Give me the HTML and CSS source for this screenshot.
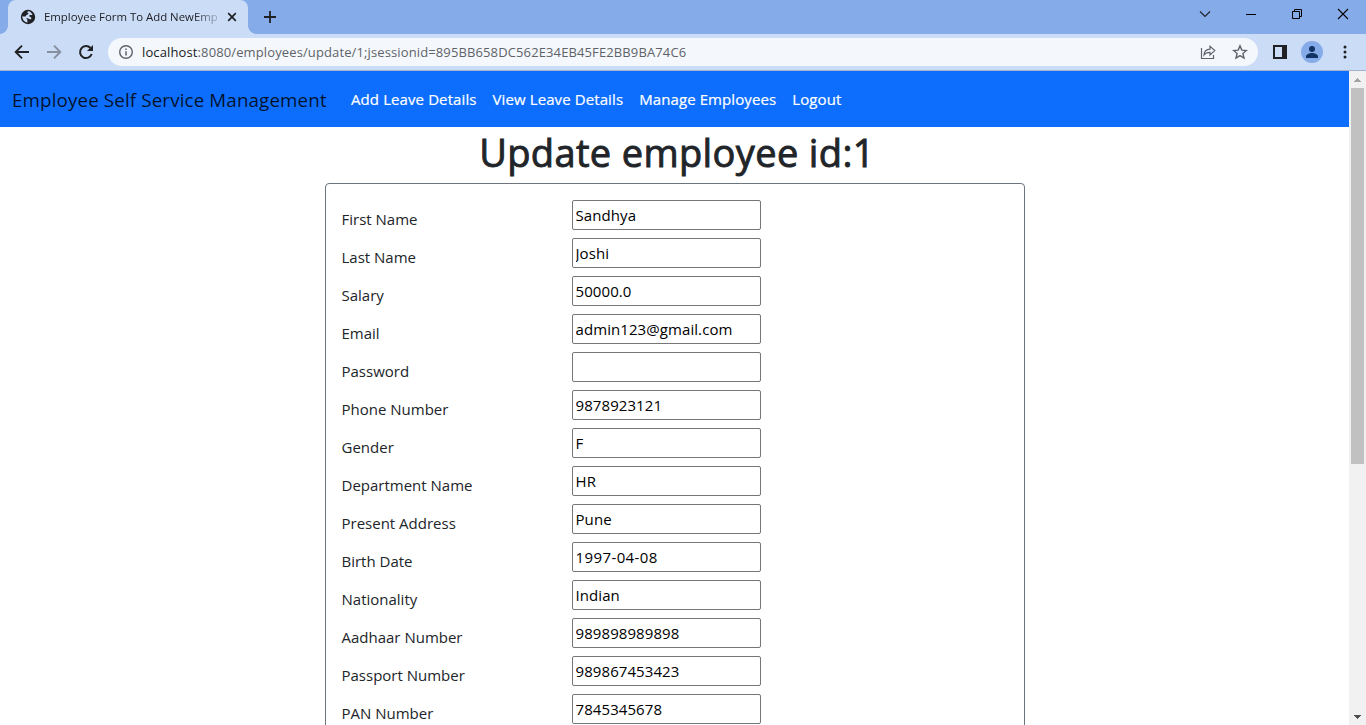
FILE: index.html
```html
<!DOCTYPE html>
<html lang="en">
<head>
<meta charset="utf-8">
<title>Employee Form To Add NewEmployee</title>
<link rel="stylesheet" href="styles.css">
</head>
<body>
<div class="tabstrip">
  <div class="tab">
    <svg class="favicon" width="16" height="16" viewBox="0 0 16 16"><circle cx="8" cy="8" r="7.2" fill="#202124"/><path d="M8.6 2.2c-1.6.2-1.6 1.6-.6 1.9 1 .3.3 1.4-.8 1.6-1.3.2-1 1.5-2 1.7-.8.2-1.6-.3-2.9-.2 0 2.600 1.200 4.600 3.200 5.800.8.3 1.600.5 2.100.4.2-1.100-.8-1.300-.3-2.200.4-.8-.3-1.600-1.300-1.800 1.100-.4 2.600.1 3.300.700 1 .8 2.300-.1 2-1.400-.3-1-1.500-.6-2-1.500-.3-.8.7-1.300 1.700-1.100.9.2 1.600-.3 1.300-.9-.8-1.500-2.200-2.800-3.700-3z" fill="#cbdcf6"/></svg>
    <span class="tab-title">Employee Form To Add NewEmp</span>
    <svg class="tab-close" width="10" height="10" viewBox="0 0 10 10"><path d="M1.200 1.200l7.600 7.600M8.800 1.200L1.200 8.800" stroke="#202124" stroke-width="1.700"/></svg>
  </div>
  <svg class="new-tab" width="12" height="12" viewBox="0 0 12 12"><path d="M6 0v12M0 6h12" stroke="#202124" stroke-width="1.800"/></svg>
  <div class="window-controls">
    <svg width="46" height="28" viewBox="0 0 46 28"><path d="M18 11.500l5 5 5-5" fill="none" stroke="#202124" stroke-width="1.100"/></svg>
    <svg width="46" height="28" viewBox="0 0 46 28"><path d="M18 14.500h10" stroke="#000"/></svg>
    <svg width="46" height="28" viewBox="0 0 46 28"><path d="M18.500 11.500h7v7h-7zM20.500 11.500v-2h7v7h-2" fill="none" stroke="#000"/></svg>
    <svg width="46" height="28" viewBox="0 0 46 28"><path d="M18 9l10 10M28 9L18 19" stroke="#000" stroke-width="1.100"/></svg>
  </div>
</div>
<div class="toolbar">
  <svg class="nav-icon" width="16" height="16" viewBox="0 0 16 16"><path d="M15 8H2M8 1.700L1.700 8 8 14.300" fill="none" stroke="#202124" stroke-width="1.900"/></svg>
  <svg class="nav-icon" width="16" height="16" viewBox="0 0 16 16"><path d="M1 8h13M8 1.700L14.300 8 8 14.300" fill="none" stroke="#868fa0" stroke-width="1.900"/></svg>
  <svg class="nav-icon" width="16" height="16" viewBox="0 0 16 16"><path d="M13.700 10A6 6 0 1 1 12.500 4" fill="none" stroke="#202124" stroke-width="2"/><path d="M15 1v6H9z" fill="#202124"/></svg>
  <div class="omnibox">
    <svg width="16" height="16" viewBox="0 0 16 16"><circle cx="8" cy="8" r="6.300" fill="none" stroke="#5f6368" stroke-width="1.400"/><path d="M8 7.200v4.200M8 4.400v1.600" stroke="#5f6368" stroke-width="1.500"/></svg>
    <span class="url"><span class="host">localhost</span>:8080/employees/update/1;jsessionid=895BB658DC562E34EB45FE2BB9BA74C6</span>
    <svg class="share" width="16" height="16" viewBox="0 0 16 16"><path d="M1.500 4v10.500h12V11M4 11c.2-3.600 2.200-5.700 6-5.900V2.300L14.800 6.600 10 10.900V8.300C7.300 8.200 5.500 9 4 11z" fill="none" stroke="#5f6368" stroke-width="1.200"/></svg>
    <svg class="star" width="16" height="16" viewBox="0 0 16 16"><path d="M8 1.900l1.800 4.200 4.600.4-3.500 3 1.100 4.500L8 11.600 4 14l1.100-4.500-3.500-3 4.600-.4z" fill="none" stroke="#5f6368" stroke-width="1.400"/></svg>
  </div>
  <svg class="panel" width="14" height="14" viewBox="0 0 14 14"><path d="M0 0h14v14H0zM2 2v10h7V2z" fill="#202124" fill-rule="evenodd"/></svg>
  <svg class="avatar" width="22" height="22" viewBox="0 0 22 22"><circle cx="11" cy="11" r="11" fill="#85ace9"/><circle cx="11" cy="8" r="3" fill="#123263"/><path d="M5 17v-1.500c0-2 3.500-3.500 6-3.500s6 1.500 6 3.500V17z" fill="#123263"/></svg>
  <svg class="menu" width="4" height="14" viewBox="0 0 4 14"><path d="M2 .5a1.500 1.500 0 1 1 0 3 1.500 1.500 0 0 1 0-3zM2 5.500a1.500 1.500 0 1 1 0 3 1.500 1.500 0 0 1 0-3zM2 10.500a1.500 1.500 0 1 1 0 3 1.500 1.500 0 0 1 0-3z" fill="#202124"/></svg>
</div>
<div class="viewport">
  <div class="page">
    <nav class="navbar">
      <a class="brand">Employee Self Service Management</a>
      <a class="nav-link">Add Leave Details</a>
      <a class="nav-link">View Leave Details</a>
      <a class="nav-link">Manage Employees</a>
      <a class="nav-link">Logout</a>
    </nav>
    <h1>Update employee id:1</h1>
    <form class="card">
      <div class="row"><label>First Name</label><input value="Sandhya"></div>
      <div class="row"><label>Last Name</label><input value="Joshi"></div>
      <div class="row"><label>Salary</label><input value="50000.0"></div>
      <div class="row"><label>Email</label><input value="admin123@gmail.com"></div>
      <div class="row"><label>Password</label><input type="password"></div>
      <div class="row"><label>Phone Number</label><input value="9878923121"></div>
      <div class="row"><label>Gender</label><input value="F"></div>
      <div class="row"><label>Department Name</label><input value="HR"></div>
      <div class="row"><label>Present Address</label><input value="Pune"></div>
      <div class="row"><label>Birth Date</label><input class="date" value="1997-04-08"></div>
      <div class="row"><label>Nationality</label><input value="Indian"></div>
      <div class="row"><label>Aadhaar Number</label><input value="989898989898"></div>
      <div class="row"><label>Passport Number</label><input value="989867453423"></div>
      <div class="row"><label>PAN Number</label><input value="7845345678"></div>
    </form>
  </div>
  <div class="scrollbar">
    <svg width="17" height="17" viewBox="0 0 17 17" shape-rendering="crispEdges"><path d="M5 11h7L8.500 7z" fill="#a3a3a3"/></svg>
    <div class="thumb"></div>
    <svg class="down" width="17" height="17" viewBox="0 0 17 17" shape-rendering="crispEdges"><path d="M5 7h7L8.500 11z" fill="#505050"/></svg>
  </div>
</div>
</body>
</html>
```
FILE: styles.css
```css
* { box-sizing: border-box; }
body {
  margin: 0;
  height: 725px;
  overflow: hidden;
  display: flex;
  flex-direction: column;
  background: #fff;
  color: #212529;
  font: 15px/24px "Open Sans", "Noto Sans", sans-serif;
}
svg { display: block; flex: none; }

/* Browser window */
.tabstrip { display: flex; flex: none; height: 34px; background: #85ace9; padding-left: 8px; }
.tab {
  position: relative;
  display: flex;
  align-items: center;
  width: 240px;
  padding: 0 11px 0 12px;
  background: #cbdcf6;
  border-radius: 8px 8px 0 0;
}
.tab::before, .tab::after {
  content: "";
  position: absolute;
  bottom: 0;
  width: 8px;
  height: 8px;
}
.tab::before { left: -8px; background: radial-gradient(circle at 0 0, #85ace9 7.5px, #cbdcf6 8px); }
.tab::after { right: -8px; background: radial-gradient(circle at 100% 0, #85ace9 7.5px, #cbdcf6 8px); }
.tab-title {
  width: 175px;
  margin-left: 8px;
  white-space: nowrap;
  font-size: 11.4px;
  color: #202124;
  -webkit-mask-image: linear-gradient(90deg, #000 150px, transparent 180px);
  mask-image: linear-gradient(90deg, #000 150px, transparent 180px);
}
.tab-close { margin-left: auto; }
.new-tab { margin: 11px 0 0 16px; }
.window-controls { display: flex; margin-left: auto; }
.toolbar {
  display: flex;
  flex: none;
  align-items: center;
  height: 37px;
  padding-left: 14px;
  background: #cbdcf6;
  border-bottom: 1px solid #a3b3ce;
}
.nav-icon { margin-right: 16px; }
.omnibox {
  display: flex;
  align-items: center;
  width: 1150px;
  height: 28px;
  margin-left: -2px;
  padding: 0 10px;
  border-radius: 14px;
  background: #f4f8fd;
}
.url { margin-left: 8px; font-size: 13px; letter-spacing: .12px; color: #5f6368; white-space: nowrap; }
.host { color: #202124; }
.share { margin-left: auto; }
.star { margin-left: 16px; }
.panel { margin-left: 15px; }
.avatar { margin-left: 14px; }
.menu { margin-left: 20px; }

/* Page */
.viewport { display: flex; flex: 1; min-height: 0; }
.page { flex: 1; overflow: hidden; }
.navbar { display: flex; align-items: center; height: 56px; padding-left: 12px; background: #0d6efd; white-space: nowrap; }
.brand { width: 331px; padding-top: 2px; font-size: 18.75px; letter-spacing: .14px; color: rgba(0, 0, 0, .85); }
.nav-link { padding: 0 8px; letter-spacing: .1px; color: #fff; -webkit-text-stroke: .2px #fff; }
h1 {
  margin: 1px 0 7px;
  padding-left: 5px;
  text-align: center;
  font-size: 38px;
  font-weight: 500;
  line-height: 48px;
  letter-spacing: .36px;
  -webkit-text-stroke: .9px #212529;
}
.card { width: 700px; height: 900px; margin: 0 auto; padding: 16px; border: 1px solid #6c757d; border-radius: 4px; }
.row { display: flex; height: 38px; }
label { width: 230px; padding-top: 7px; }
input {
  width: 189px;
  height: 30px;
  padding: 1px 2px 1px 3px;
  border: 1px solid #767676;
  border-radius: 2px;
  background: #fff;
  color: #000;
  font: inherit;
  letter-spacing: .08px;
}
.date { letter-spacing: .4px; }
.scrollbar { display: flex; flex-direction: column; width: 17px; background: #f1f1f1; }
.thumb { width: 13px; height: 376px; margin-left: 2px; background: #c1c1c1; }
.down { margin-top: auto; }
```
